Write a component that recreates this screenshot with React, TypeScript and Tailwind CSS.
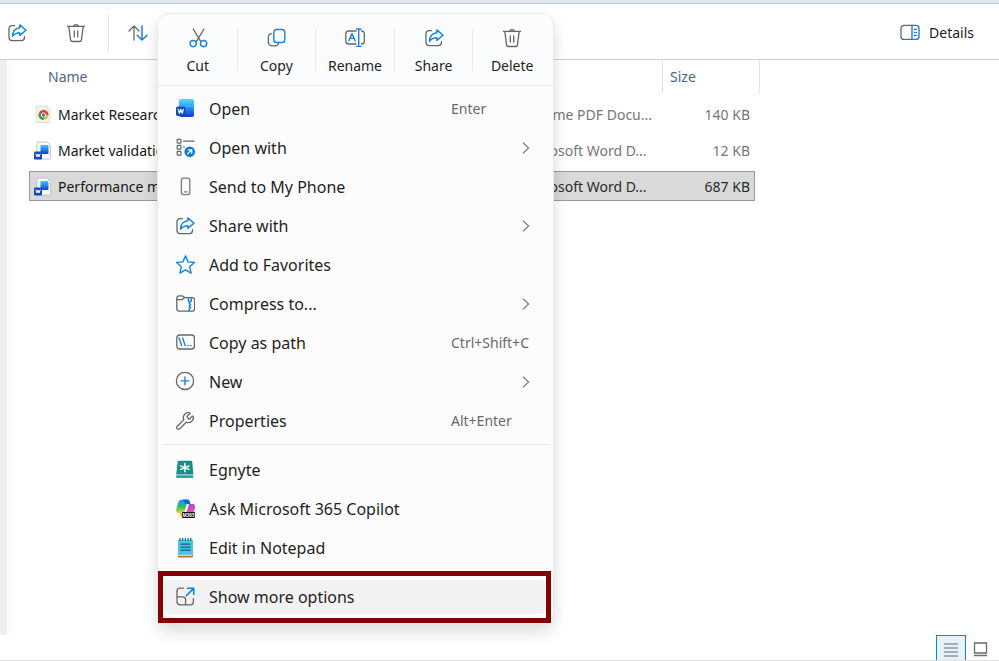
import type { ReactNode } from 'react';
import { Wrench } from 'lucide-react';

const GRAY = '#666666';
const BLUE = '#1583dc';

function Svg({ children }: { children: ReactNode }) {
  return (
    <svg width="20" height="20" viewBox="0 0 20 20" fill="none" strokeWidth="1.3" strokeLinecap="round" strokeLinejoin="round" className="shrink-0" aria-hidden="true">
      {children}
    </svg>
  );
}

function ShareIcon() {
  return (
    <Svg>
      <path stroke={GRAY} d="M7.6 2.6H5a3 3 0 0 0-3 3v9a3 3 0 0 0 3 3h9.5a3 3 0 0 0 3-3V13.6" />
      <path stroke={BLUE} strokeWidth="1.4" d="M12.8 1.9 19 7.2l-6.2 5.2V9.7c-3.2 0-5.3 1-7.3 3.6.2-4.8 3-8.1 7.3-8.6Z" />
    </Svg>
  );
}

function TrashIcon() {
  return (
    <Svg>
      <g stroke={GRAY}>
        <path d="M1.5 3.4h17M7.4 3.2a2.7 2.2 0 0 1 5.2 0" />
        <path d="m2.8 3.6 1.8 13.2a2 2 0 0 0 2 1.7h6.8a2 2 0 0 0 2-1.7l1.8-13.2M8.3 8v6M11.7 8v6" />
      </g>
    </Svg>
  );
}

function SortIcon() {
  return (
    <Svg>
      <path stroke={GRAY} d="M6 17V3M1 8l5-5 5 5" />
      <path stroke={BLUE} strokeWidth="1.5" d="M14 3v14M9.2 12.2 14 17l5-4.8" />
    </Svg>
  );
}

function DetailsIcon() {
  return (
    <Svg>
      <path stroke={GRAY} d="M12 2.4H4a3 3 0 0 0-3 3v8a3 3 0 0 0 3 3h8" />
      <path stroke={BLUE} strokeWidth="1.4" d="M12 2.4h4a3 3 0 0 1 3 3v8a3 3 0 0 1-3 3h-4ZM14.4 6.4h2M14.4 9.4h2M14.4 12.4h2" />
    </Svg>
  );
}

function CutIcon() {
  return (
    <Svg>
      <path stroke={GRAY} d="M5.2 1 12.6 13.2M16 1 8.6 13.2" />
      <circle cx="5.2" cy="15.6" r="3.1" stroke={BLUE} strokeWidth="1.4" />
      <circle cx="15.6" cy="15.6" r="3.1" stroke={BLUE} strokeWidth="1.4" />
    </Svg>
  );
}

function CopyIcon() {
  return (
    <Svg>
      <path stroke={GRAY} d="M5.5 5.6A3 3 0 0 0 2.4 8.6v6a3.2 3.2 0 0 0 3.2 3.2h4a3 3 0 0 0 2.9-2.4" />
      <rect x="7.8" y="1.5" width="11" height="13" rx="2.8" stroke={BLUE} strokeWidth="1.4" />
    </Svg>
  );
}

function RenameIcon() {
  return (
    <Svg>
      <path stroke={GRAY} d="M11 3H3.6A2.8 2.8 0 0 0 .8 5.8v7.4A2.8 2.8 0 0 0 3.6 16H11M16.5 3a2.8 2.8 0 0 1 2.8 2.8v7.4a2.8 2.8 0 0 1-2.8 2.8" />
      <path stroke={BLUE} strokeWidth="1.4" d="M3.8 12.8 7 5.5l3.2 7.3M5 10.4h4M13.7 1v17.4M11.5 1h4.4M11.5 18.4h4.4" />
    </Svg>
  );
}

function WordIcon() {
  return (
    <Svg>
      <defs>
        <linearGradient id="word-page" x1="0" y1="0" x2="0" y2="1">
          <stop offset="0" stopColor="#4ee0fb" />
          <stop offset=".38" stopColor="#2fa5f6" />
          <stop offset=".7" stopColor="#1a6be4" />
          <stop offset="1" stopColor="#123cb4" />
        </linearGradient>
      </defs>
      <rect x="4" y="0" width="15" height="18" rx="2" fill="url(#word-page)" />
      <path d="M4 7c4-1 10 0 15-3v3c-5 2-10 0-15 3Z" fill="#54b8ff" opacity=".5" />
      <rect x="1" y="7.5" width="9.5" height="9.5" rx="1.8" fill="#1748c4" />
      <path stroke="#fff" strokeWidth="1.2" d="m3.2 10.3 1.2 4 1.4-4 1.4 4 1.2-4" />
    </Svg>
  );
}

function OpenWithIcon() {
  return (
    <Svg>
      <g stroke={GRAY} strokeWidth="1.2">
        <rect x="2.2" y="1.4" width="3.8" height="3.8" rx=".6" />
        <rect x="2.2" y="7.4" width="3.8" height="3.8" rx=".6" />
        <rect x="2.2" y="13.4" width="3.8" height="3.8" rx=".6" />
        <path d="M8.6 3.2H19M8.4 9h1" />
      </g>
      <circle cx="14.7" cy="13.8" r="5.3" fill="#0c7bd6" />
      <path stroke="#fff" d="m12.6 15.9 4-4M13.4 11.8h3.3v3.3" />
    </Svg>
  );
}

function PhoneIcon() {
  return (
    <Svg>
      <rect x="6.4" y="1.2" width="8.4" height="16.4" rx="2" stroke="#7a7a7a" />
      <path stroke="#7a7a7a" d="M9.4 14.8h2.6" />
    </Svg>
  );
}

function StarIcon() {
  return (
    <Svg>
      <path stroke={BLUE} strokeWidth="1.4" d="m10.5.9 2.6 6 6.3.6-4.7 4.3 1.4 6.3-5.6-3.3-5.6 3.3 1.4-6.3L1.6 7.5l6.3-.6Z" />
    </Svg>
  );
}

function CompressIcon() {
  return (
    <Svg>
      <path stroke={GRAY} d="M1.8 4.2a2.4 2.4 0 0 1 2.4-2.4h3L9.6 3.6h7.6A2.4 2.4 0 0 1 19.6 6v8.8a2.4 2.4 0 0 1-2.4 2.4h-13a2.4 2.4 0 0 1-2.4-2.4ZM1.8 5.6h5.4l2.4-2" />
      <path stroke={BLUE} strokeWidth="1.5" d="M13.4 4.4v2.6l1.4 1.2 1.4-1.2V4.4M14.2 9.4l1.4 1.4-1.4 1.4 1.4 1.4-1.4 1.4v1.8" />
    </Svg>
  );
}

function CopyPathIcon() {
  return (
    <Svg>
      <rect x="1.8" y="2" width="17.6" height="14" rx="2.8" stroke={GRAY} />
      <path stroke={BLUE} strokeWidth="1.4" d="m4 5 2.6 7.6M7.6 5l2.6 7.6M12.6 12.6h.4M15.8 12.6h.4" />
    </Svg>
  );
}

function NewIcon() {
  return (
    <Svg>
      <circle cx="10" cy="8.9" r="8.6" stroke={GRAY} />
      <path stroke={BLUE} strokeWidth="1.4" d="M10 5v7.8M6.1 8.9h7.8" />
    </Svg>
  );
}

function EgnyteIcon() {
  return (
    <Svg>
      <path fill="#168e8a" d="M3.6.8h12.6a1 1 0 0 1 1 .8L18.4 14.4H1.2L2.7 1.6a1 1 0 0 1 .9-.8Z" />
      <path fill="#2aa39c" d="M1.2 15.2h17.2V17a1 1 0 0 1-1 1H2.2a1 1 0 0 1-1-1Z" />
      <path stroke="#fff" strokeWidth="1.5" d="M9.9 3.4v8.4M5.8 6l8.2 3.4M14 6 5.8 9.4" />
    </Svg>
  );
}

function CopilotIcon() {
  return (
    <Svg>
      <defs>
        <linearGradient id="cop-left" x1="0" y1="0" x2="0" y2="1">
          <stop offset="0" stopColor="#1598e8" />
          <stop offset=".5" stopColor="#2bbd74" />
          <stop offset="1" stopColor="#f4d11c" />
        </linearGradient>
        <linearGradient id="cop-right" x1="0" y1="0" x2="0" y2="1">
          <stop offset="0" stopColor="#9a4ff0" />
          <stop offset=".6" stopColor="#ee4f9c" />
          <stop offset="1" stopColor="#ff8a5b" />
        </linearGradient>
      </defs>
      <path fill="url(#cop-left)" d="M6.6.8H13L9.6 12.2c-.5 1.5-1.4 2-2.8 2H4c-2.4 0-3.4-1.7-2.7-4l2-6.6C3.9 1.8 4.8.8 6.6.8Z" />
      <path fill="#1763d8" d="M7.8.5h4.6c1.4 0 2 .8 2.4 2l.7 2.6h-4.2C9.6 5.1 9.2 1.8 7.8.5Z" />
      <path fill="url(#cop-right)" d="M14 5h3.4c2.4 0 3.2 1.6 2.6 3.9l-1.8 6.2c-.6 1.9-1.6 2.9-3.4 2.9H8c1.6 0 2.3-1 2.7-2.4Z" />
      <path fill="#ffb04a" d="M4.6 14.2h4.6c-.5 1.6-.7 3.6-2 3.6-1.6 0-2-2.2-2.6-3.6Z" />
      <rect x="7" y="13" width="13" height="6" rx=".8" fill="#111" />
      <text x="13.5" y="17.7" textAnchor="middle" fontSize="4.5" fontWeight="700" fill="#fff" fontFamily="Noto Sans, sans-serif">M365</text>
    </Svg>
  );
}

function NotepadIcon() {
  return (
    <Svg>
      <path fill="#4fc3df" d="M3 2h15v15H3Z" />
      <path fill="#c06a26" d="M3 17h15v1.4a1 1 0 0 1-1 1H4a1 1 0 0 1-1-1Z" />
      <path fill="#e8eef0" d="M3.4 16.8h14v1h-14Z" />
      <path stroke="#1379a0" strokeWidth="1.4" d="M5 .6v1.8M7.7.6v1.8M10.4.6v1.8M13.1.6v1.8M15.8.6v1.8" />
      <path stroke="#0f5f86" strokeWidth="1.2" d="M6 6.2h9M6 9.2h9M6 12.2h9" />
    </Svg>
  );
}

function MoreOptionsIcon() {
  return (
    <Svg>
      <path stroke={GRAY} d="M8.4 1.2H5a3 3 0 0 0-3 3v10.6a3 3 0 0 0 3 3h10.4a3 3 0 0 0 3-3V11.6M2.2 9.8h5.4a3 3 0 0 1 3 3v4.8" />
      <path stroke={BLUE} strokeWidth="1.5" d="M11.4 8.6 18.6 1.4M12.4 1.2h6.4v6.4" />
    </Svg>
  );
}

function ChromeFileIcon() {
  return (
    <Svg>
      <path fill="#f1f1f1" stroke="#dedede" strokeWidth="1" d="M3.5 1H14l3 3v13.5H3.5Z" />
      <path fill="#fff" stroke="#dedede" strokeWidth=".8" d="M14 1v3h3" />
      <circle cx="10.5" cy="10" r="5" fill="#fbc116" />
      <path fill="#e33b2e" d="M10.5 10h5a5 5 0 0 0-9.3-2.5l2.2 3.7Z" />
      <path fill="#2c9f47" d="M6.2 7.5a5 5 0 0 0 4 7.5l2.3-3.8-2-1.2-2 1.2Z" />
      <circle cx="10.5" cy="10" r="2.2" fill="#2f7de1" stroke="#fff" strokeWidth=".9" />
    </Svg>
  );
}

function WordFileIcon() {
  return (
    <Svg>
      <defs>
        <linearGradient id="word-file" x1="0" y1="0" x2="0" y2="1">
          <stop offset="0" stopColor="#45c8f7" />
          <stop offset=".5" stopColor="#1f83ef" />
          <stop offset="1" stopColor="#163fbd" />
        </linearGradient>
      </defs>
      <path fill="#fafafa" stroke="#b9bcc0" strokeWidth=".9" d="M5.5 1H14l3.700 3.700V16.500a1.600 1.600 0 0 1-1.600 1.600H5.500a1.600 1.600 0 0 1-1.600-1.600V2.600A1.600 1.600 0 0 1 5.500 1Z" />
      <rect x="7.5" y="4" width="8" height="9" rx=".8" fill="url(#word-file)" />
      <rect x="1" y="10.5" width="8" height="8" rx="1.2" fill="#1748b8" />
      <path stroke="#fff" strokeWidth="1" d="m2.9 13 1 3 1.100-3 1.100 3 1-3" />
    </Svg>
  );
}

const files = [
  { name: 'Market Research', type: 'Chrome PDF Docu...', size: '140 KB', icon: <ChromeFileIcon />, selected: false },
  { name: 'Market validation', type: 'Microsoft Word D...', size: '12 KB', icon: <WordFileIcon />, selected: false },
  { name: 'Performance metrics', type: 'Microsoft Word D...', size: '687 KB', icon: <WordFileIcon />, selected: true },
];

const quickActions = [
  { label: 'Cut', icon: <CutIcon /> },
  { label: 'Copy', icon: <CopyIcon /> },
  { label: 'Rename', icon: <RenameIcon /> },
  { label: 'Share', icon: <ShareIcon /> },
  { label: 'Delete', icon: <TrashIcon /> },
];

interface MenuEntry {
  label: string;
  icon: ReactNode;
  shortcut?: string;
  submenu?: boolean;
}

const mainItems: MenuEntry[] = [
  { label: 'Open', icon: <WordIcon />, shortcut: 'Enter' },
  { label: 'Open with', icon: <OpenWithIcon />, submenu: true },
  { label: 'Send to My Phone', icon: <PhoneIcon /> },
  { label: 'Share with', icon: <ShareIcon />, submenu: true },
  { label: 'Add to Favorites', icon: <StarIcon /> },
  { label: 'Compress to...', icon: <CompressIcon />, submenu: true },
  { label: 'Copy as path', icon: <CopyPathIcon />, shortcut: 'Ctrl+Shift+C' },
  { label: 'New', icon: <NewIcon />, submenu: true },
  { label: 'Properties', icon: <Wrench size={20} strokeWidth={1.5} color={GRAY} />, shortcut: 'Alt+Enter' },
];

const appItems: MenuEntry[] = [
  { label: 'Egnyte', icon: <EgnyteIcon /> },
  { label: 'Ask Microsoft 365 Copilot', icon: <CopilotIcon /> },
  { label: 'Edit in Notepad', icon: <NotepadIcon /> },
];

function MenuItem({ item }: { item: MenuEntry }) {
  return (
    <button role="menuitem" className="flex h-[39px] w-full items-center gap-[14px] pl-[17px] text-left text-base text-[#1f1f1f]">
      {item.icon}
      <span className="flex-1">{item.label}</span>
      {item.shortcut && <span className="w-[102px] text-sm text-[#696969]">{item.shortcut}</span>}
      {item.submenu && (
        <svg width="8" height="12" viewBox="0 0 8 12" fill="none" stroke="#7c7c7c" strokeWidth="1.2" className="mr-[23px]" aria-hidden="true">
          <path d="m1 .8 5.6 5.2L1 11.2" />
        </svg>
      )}
    </button>
  );
}

function ContextMenu() {
  return (
    <div role="menu" className="absolute left-[157px] top-[13px] w-[397px] rounded-xl border border-[#e7e8ea] bg-[#fcfcfc] shadow-[0_8px_16px_rgba(0,0,0,0.14)]">
      <div className="flex h-[72px] items-center rounded-t-xl border-b border-[#e9eaec] bg-[#fbfcfd] pl-px pr-[2px]">
        {quickActions.map((action) => (
          <button
            key={action.label}
            role="menuitem"
            className="flex h-[42px] flex-1 flex-col items-center justify-center text-sm text-[#1f1f1f] not-last:border-r not-last:border-[#e9eaec]"
          >
            <span className="pb-2 pt-1">{action.icon}</span>
            {action.label}
          </button>
        ))}
      </div>

      <div className="py-[3px]">
        {mainItems.map((item) => (
          <MenuItem key={item.label} item={item} />
        ))}
      </div>
      <div className="mx-1 mt-px border-t border-[#e6e6e6]"></div>
      <div className="pb-1 pt-[5px]">
        {appItems.map((item) => (
          <MenuItem key={item.label} item={item} />
        ))}
      </div>

      {/* Highlighted entry */}
      <div className="mr-[2px] border-[5px] border-[#850000] bg-[#fcfcfc] px-px py-1">
        <button role="menuitem" className="flex h-[34px] w-full items-center gap-[14px] rounded bg-[#f2f2f2] pl-[11px] text-left text-base text-[#1f1f1f]">
          <MoreOptionsIcon />
          Show more options
        </button>
      </div>
    </div>
  );
}

export default function App() {
  return (
    <div className="relative flex min-h-screen flex-col overflow-hidden bg-white font-['Noto_Sans',sans-serif] text-sm">
      <div className="h-1 border-b border-[#b9cbdc] bg-[#e3e6eb]"></div>

      {/* Toolbar */}
      <div className="flex h-14 items-center border-b border-[#c7d0da] pl-[7px] pr-[25px] pt-[3px]">
        <button aria-label="Share"><ShareIcon /></button>
        <button aria-label="Delete" className="ml-[39px]"><TrashIcon /></button>
        <div className="ml-[22px] h-[38px] w-px bg-[#e4e7ea]"></div>
        <button aria-label="Sort" className="ml-[19px]"><SortIcon /></button>
        <button className="ml-auto flex items-center gap-[9px] text-[#1c1c1c]">
          <DetailsIcon />
          Details
        </button>
      </div>

      {/* File list */}
      <main className="flex flex-1">
        <div className="w-[7px] bg-[#efefef]"></div>
        <div className="ml-[2px] flex-1 border-l border-[#f5f5f5] pl-[19px]">
          <table className="w-[731px] table-fixed">
            <thead>
              <tr className="text-left align-top text-[#4c6585]">
                <th className="h-9 p-0 font-normal">
                  <div className="flex h-[33px] items-center pl-[19px]">Name</div>
                </th>
                <th className="w-[150px] p-0" aria-label="Type"></th>
                <th className="w-[98px] p-0 font-normal">
                  <div className="flex h-[33px] items-center border-x border-[#e0e3e6] pl-[7px]">Size</div>
                </th>
              </tr>
            </thead>
            <tbody>
              {files.map((file) => {
                const box = file.selected ? 'border-[#999999] bg-[#d9d9d9]' : 'border-transparent';
                const meta = file.selected ? 'text-[#2b2b2b]' : 'text-[#767676]';
                return (
                  <tr key={file.name}>
                    <td className="px-0 py-[3px]">
                      <div className={`flex h-[30px] items-center gap-[5px] whitespace-nowrap border-y border-l pl-[3px] pt-[2px] text-[#161616] ${box}`}>
                        {file.icon}
                        {file.name}
                      </div>
                    </td>
                    <td className="px-0 py-[3px]">
                      <div className={`flex h-[30px] items-center whitespace-nowrap border-y pl-[9px] pt-[2px] ${box} ${meta}`}>{file.type}</div>
                    </td>
                    <td className="py-[3px] pl-0 pr-[5px]">
                      <div className={`flex h-[30px] items-center justify-end border-y border-r pr-1 pt-[2px] ${box} ${meta}`}>{file.size}</div>
                    </td>
                  </tr>
                );
              })}
            </tbody>
          </table>
        </div>
      </main>

      {/* Status bar */}
      <footer className="flex h-[26px] items-stretch justify-end gap-[7px] border-b border-[#e3e3e3] pr-[11px]">
        <button aria-label="Details view" className="flex w-[30px] items-center justify-center border border-b-0 border-[#1583dc] bg-[#e3f2fb]">
          <svg width="14" height="14" viewBox="0 0 14 14" stroke="#6a6a6a" strokeWidth="1.2" className="mt-1" aria-hidden="true">
            <path d="M0 1h14M0 5h14M0 9h14M0 13h14" />
          </svg>
        </button>
        <button aria-label="Thumbnail view" className="pt-1">
          <svg width="15" height="15" viewBox="0 0 15 15" fill="none" stroke="#6a6a6a" strokeWidth="1.3" aria-hidden="true">
            <path d="M1.5 1h12v10h-12ZM1 13.5h13" />
          </svg>
        </button>
      </footer>

      <ContextMenu />
    </div>
  );
}
